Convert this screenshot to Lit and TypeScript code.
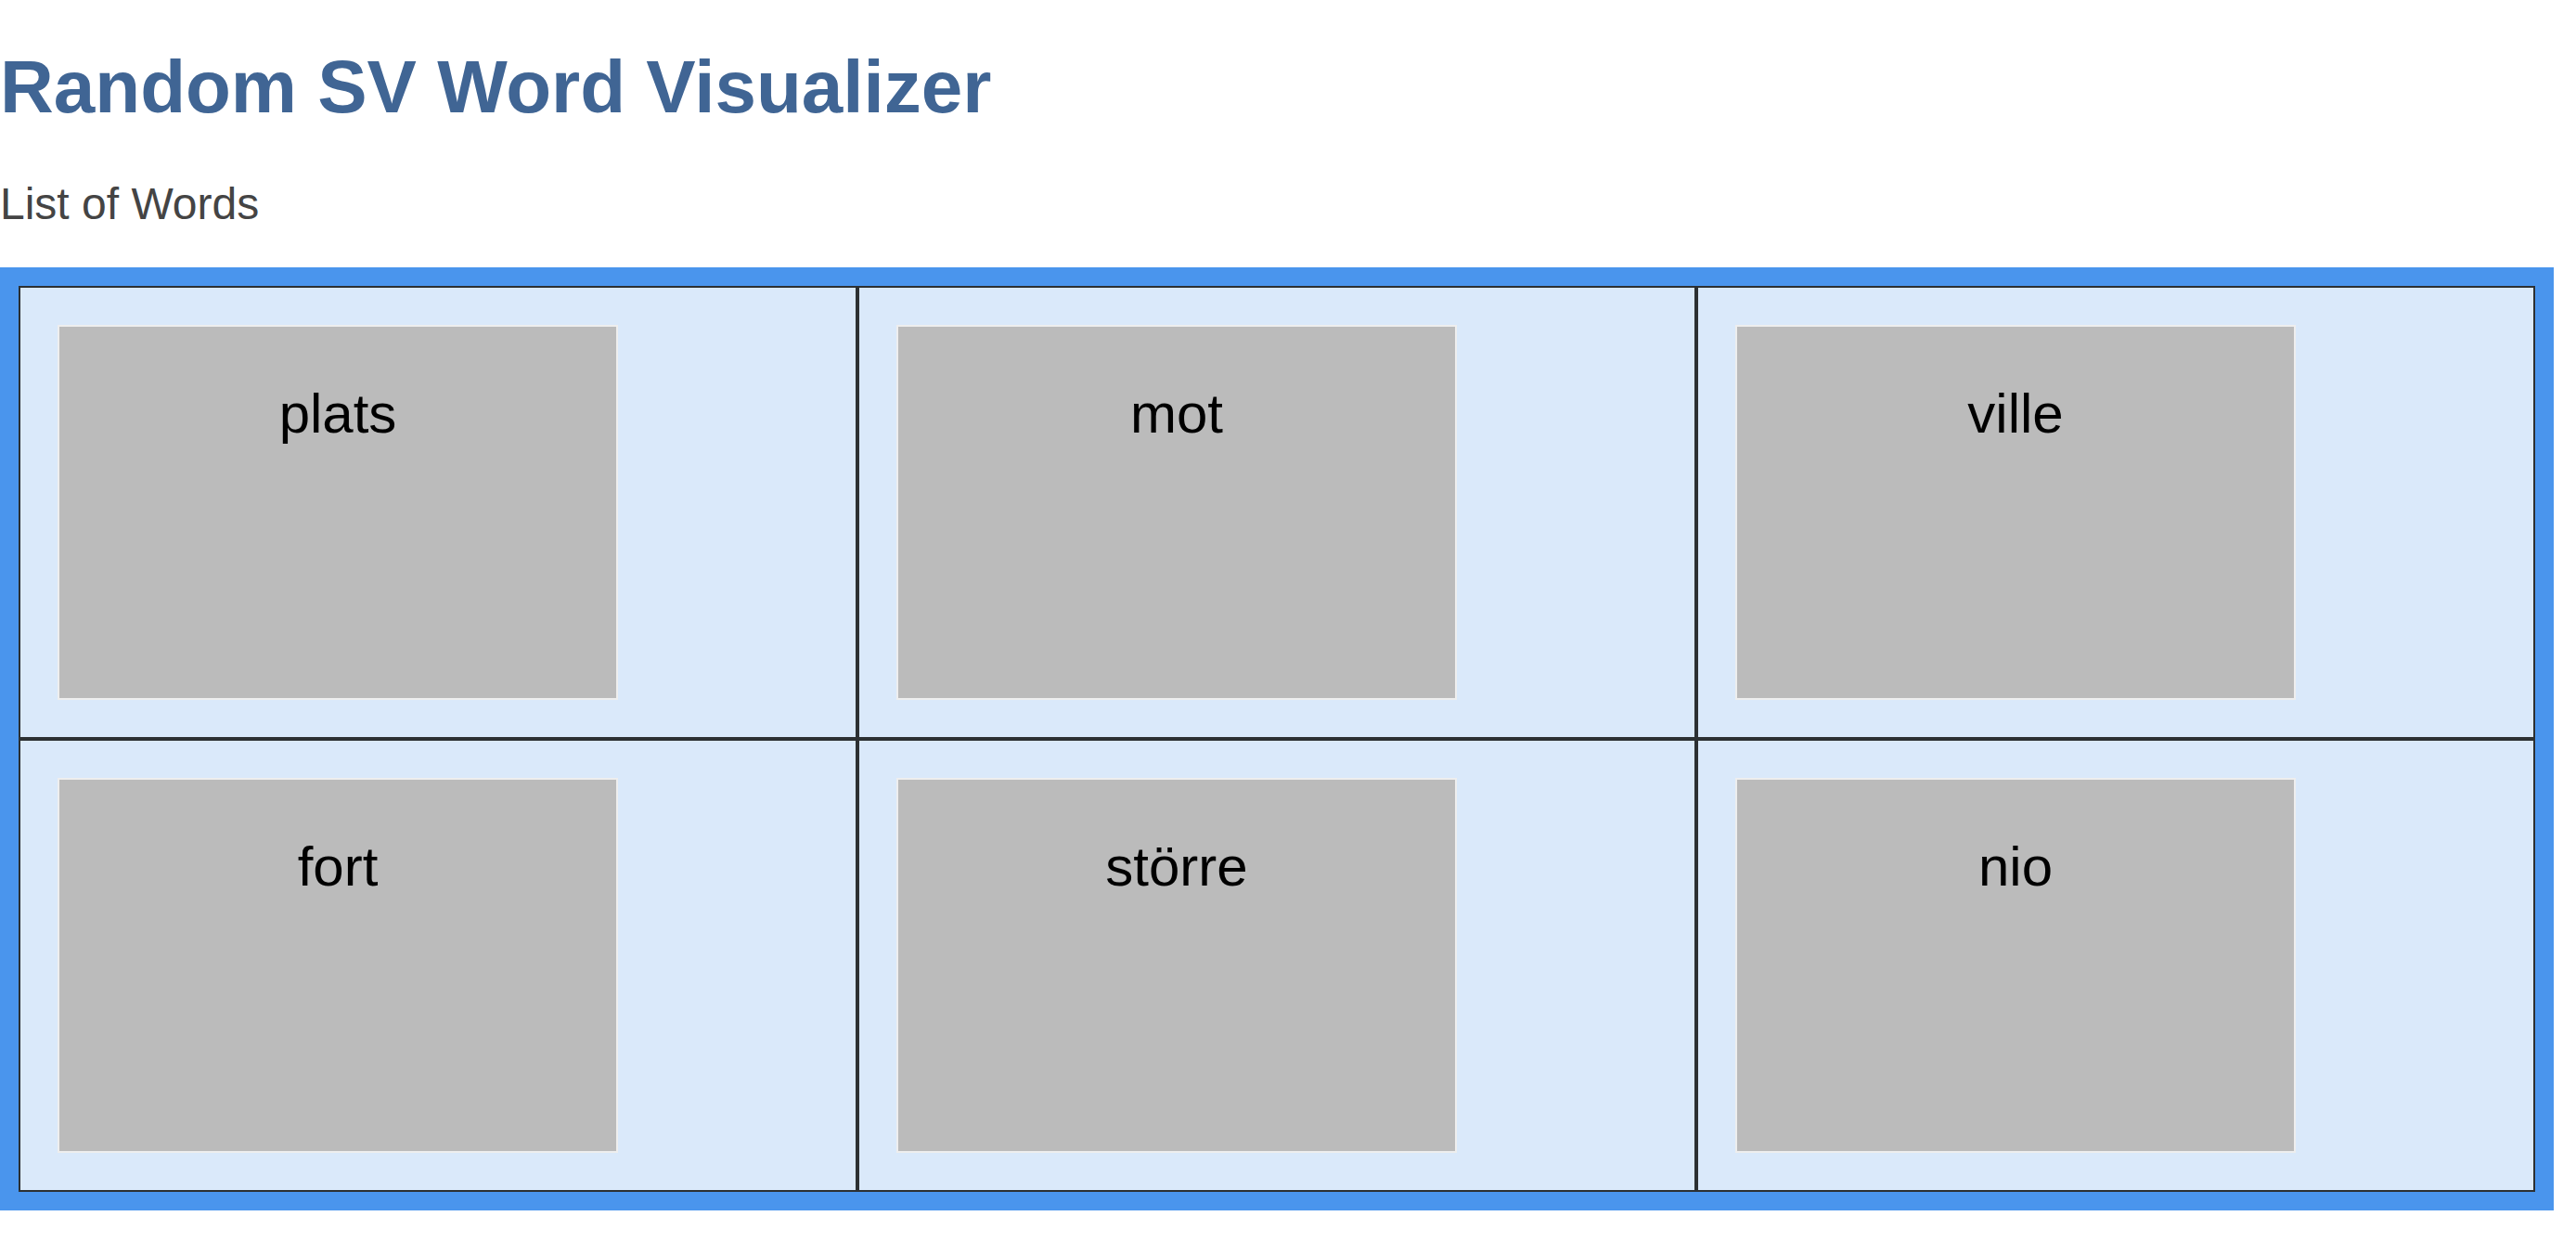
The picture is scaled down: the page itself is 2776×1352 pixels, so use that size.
import { LitElement, html, css } from "lit";
import { customElement, property, state } from "lit/decorators.js";

@customElement("word-card")
class WordCard extends LitElement {
  @property() word = "";

  static styles = css`
    :host {
      display: block;
      box-sizing: border-box;
      padding: 40px;
      border: 2px solid #2c3032;
      background: #dae9fa;
    }
    .card {
      box-sizing: border-box;
      max-width: 604px;
      min-height: 404px;
      padding-top: 60px;
      border: 2px solid #eeeeee;
      background: #bbbbbb;
      color: #000000;
      font-size: 60px;
      line-height: 68px;
      text-align: center;
    }
  `;

  render() {
    return html`<div class="card">${this.word}</div>`;
  }
}

@customElement("app-root")
class AppRoot extends LitElement {
  @state() private words = ["plats", "mot", "ville", "fort", "större", "nio"];

  static styles = css`
    :host {
      display: block;
      font-family: Arial, "Liberation Sans", Helvetica, sans-serif;
    }
    .title {
      margin: 0;
      padding-top: 48px;
      color: #406594;
      font-size: 80px;
      font-weight: bold;
      line-height: 92px;
    }
    .subtitle {
      margin: 0;
      padding: 52px 0 40px;
      color: #444444;
      font-size: 48px;
      font-weight: normal;
      line-height: 56px;
    }
    .words {
      display: grid;
      grid-template-columns: repeat(3, minmax(0, 1fr));
      margin-right: 24px;
      padding: 20px;
      background: #4a95ed;
    }
  `;

  render() {
    return html`
      <main>
        <h1 class="title">Random SV Word Visualizer</h1>
        <h2 class="subtitle">List of Words</h2>
        <section class="words" aria-label="List of Words">
          ${this.words.map((word) => html`<word-card .word=${word}></word-card>`)}
        </section>
      </main>
    `;
  }
}
